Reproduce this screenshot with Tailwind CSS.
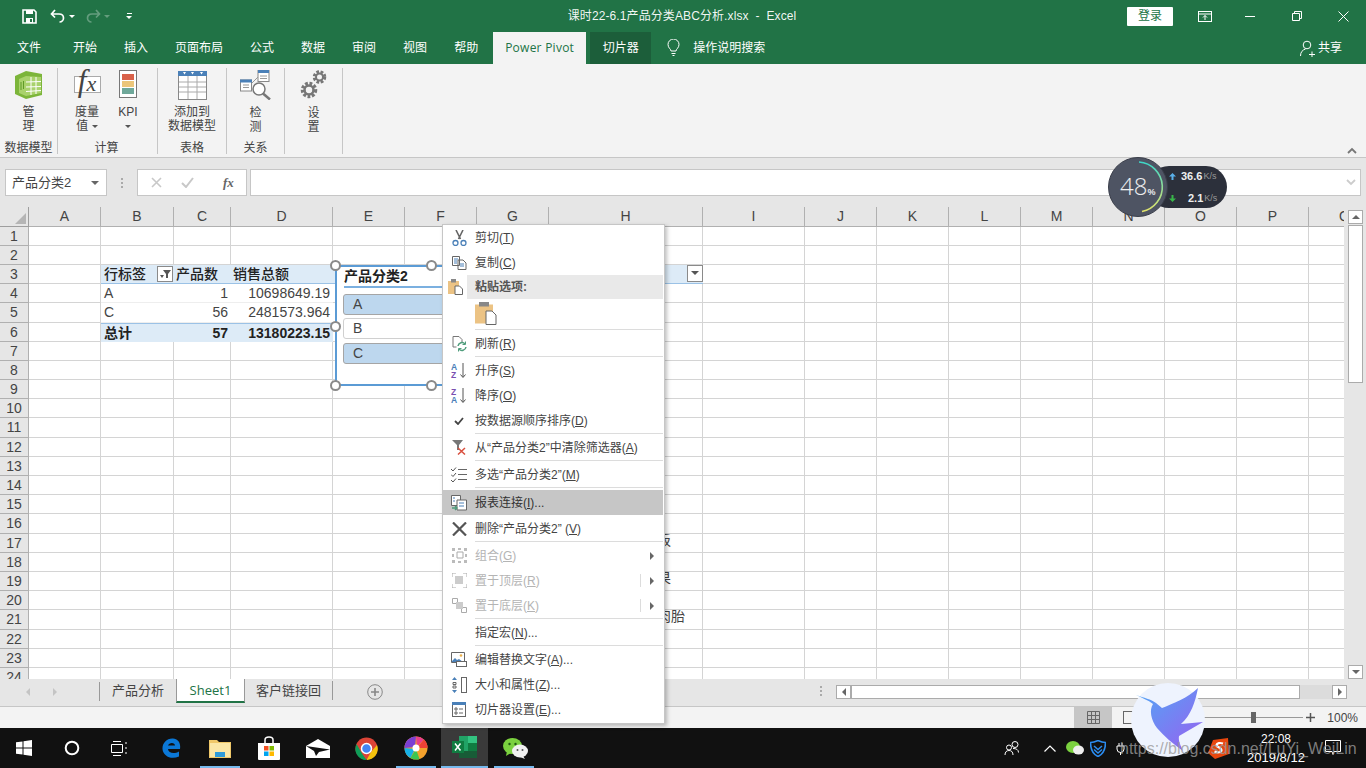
<!DOCTYPE html>
<html lang="zh-CN">
<head>
<meta charset="UTF-8">
<title>课时22-6.1产品分类ABC分析.xlsx - Excel</title>
<script src="https://cdn.jsdelivr.net/npm/@tailwindcss/browser@4"></script>
</head>
<body class="m-0 overflow-hidden">
<div class="relative w-[1366px] h-[768px] overflow-hidden bg-white text-[12px] text-[#444] font-['Liberation_Sans','Noto_Sans_CJK_SC',sans-serif]">

  <!-- title bar -->
  <div class="h-[32px] bg-[#217346] text-white grid grid-cols-[1fr_auto_1fr] items-center">
    <div class="flex items-center pl-[22px]">
      <svg class="w-[15px] h-[15px]" viewBox="0 0 15 15"><path d="M1 1h11l2 2v11H1z" fill="none" stroke="#fff" stroke-width="1.6"/><rect x="4" y="1" width="7" height="4" fill="#fff"/><rect x="4" y="9" width="7" height="5" fill="#fff"/><rect x="8" y="10" width="2" height="3" fill="#217346"/></svg>
      <svg class="w-[16px] h-[14px] ml-[13px]" viewBox="0 0 16 14"><path d="M5 1 1.500 5 5 8.500M2 5h7c3 0 4.500 2 4.500 4s-1.500 4-4 4" fill="none" stroke="#fff" stroke-width="1.700"/></svg>
      <span class="ml-[3px] w-0 h-0 border-x-[3px] border-x-transparent border-t-[3px] border-t-white"></span>
      <svg class="w-[16px] h-[14px] ml-[10px] opacity-30" viewBox="0 0 16 14"><path d="M11 1l3.500 4L11 8.500M14 5H7C4 5 2.500 7 2.500 9s1.500 4 4 4" fill="none" stroke="#fff" stroke-width="1.700"/></svg>
      <span class="ml-[3px] w-0 h-0 border-x-[3px] border-x-transparent border-t-[3px] border-t-white/30"></span>
      <span class="ml-[16px] flex flex-col items-center gap-[2px]"><span class="w-[5px] h-px bg-white"></span><span class="w-0 h-0 border-x-[3px] border-x-transparent border-t-[3px] border-t-white"></span></span>
    </div>
    <div class="text-center text-white/95 whitespace-pre tracking-[0.1px] pr-[2px]">课时22-6.1产品分类ABC分析.xlsx  -  Excel</div>
    <div class="flex items-center justify-end">
      <div class="w-[46px] h-[19px] bg-white rounded-[1px] text-[#217346] flex items-center justify-center mr-[25px]">登录</div>
      <svg class="w-[14px] h-[11px] mr-[33px]" viewBox="0 0 14 11"><rect x=".5" y=".5" width="13" height="10" fill="none" stroke="#fff"/><path d="M1 3h12M7 9V4.500M5 6.500l2-2 2 2" fill="none" stroke="#fff"/></svg>
      <span class="w-[10px] h-px bg-white mr-[37px]"></span>
      <svg class="w-[10px] h-[10px] mr-[36px]" viewBox="0 0 10 10"><path d="M2.500 2.500V.5h7v7h-2M.5 2.500h7v7h-7z" fill="none" stroke="#fff"/></svg>
      <svg class="w-[11px] h-[11px] mr-[17px]" viewBox="0 0 11 11"><path d="M.5.5l10 10M10.500.5l-10 10" stroke="#fff"/></svg>
    </div>
  </div>

  <!-- ribbon tabs -->
  <div class="h-[32px] bg-[#217346] text-white flex items-center">
    <div class="h-full flex items-center ml-[17px] mr-[32px]">文件</div>
    <div class="h-full flex items-center gap-[27px]">
      <span>开始</span><span>插入</span><span>页面布局</span><span>公式</span><span>数据</span><span>审阅</span><span>视图</span><span>帮助</span>
    </div>
    <div class="h-full w-[93px] ml-[15px] bg-[#f3f3f3] text-[#217346] flex items-center justify-center tracking-[0.25px] font-['Open_Sans',sans-serif]">Power Pivot</div>
    <div class="h-full w-[61px] ml-[4px] bg-[#1c5e3a] flex items-center justify-center">切片器</div>
    <svg class="w-[13px] h-[18px] ml-[16px]" viewBox="0 0 13 18"><path d="M4 12c0-2-3-3-3-6.500a5.500 5.500 0 0 1 11 0C12 9 9 10 9 12zM4.500 14.500h4M5.500 16.500h2" fill="none" stroke="#fff"/></svg>
    <div class="h-full flex items-center ml-[13px]">操作说明搜索</div>
    <div class="h-full flex items-center ml-auto mr-[24px]">
      <svg class="w-[15px] h-[17px] mr-[3px]" viewBox="0 0 15 17"><circle cx="7" cy="5" r="3.800" fill="none" stroke="#fff"/><path d="M.5 16c0-4 2-6 5-7M9 14.500h6M12 11.500v5.500" fill="none" stroke="#fff"/></svg>
      共享
    </div>
  </div>

  <!-- ribbon -->
  <div class="relative h-[94px] bg-[#f3f3f3] border-b border-[#c6c6c6] flex pt-[4px] leading-[14px] text-[#444]">
    <div class="w-[58px] h-[86px] border-r border-[#c6c6c6] flex flex-col items-center">
      <svg class="w-[30px] h-[30px] mt-[2px]" viewBox="0 0 30 30"><path d="M1 6 12 1l16 3v21l-16 4-11-5z" fill="#7cb53a"/><path d="M5 9l7-3v20l-7-3z" fill="#a9d26c"/><path d="M12 6l15 1v16l-15 3z" fill="#a9d26c"/><path d="M17 7v18M22 7v17M12 12l15-.5M12 17l15-.5M12 21.500l15-1" stroke="#fff"/><path d="M7 12v8M9.500 11v8" stroke="#5f9a28"/></svg>
      <div class="text-center mt-[5px] text-[12px]">管<br>理</div>
      <div class="mt-auto mb-[-1px]">数据模型</div>
    </div>
    <div class="w-[100px] h-[86px] border-r border-[#c6c6c6] flex flex-col">
      <div class="flex">
        <div class="w-[58px] flex flex-col items-center">
          <div class="relative w-[27px] h-[28px] mt-[2px] flex items-center justify-center">
            <span class="absolute left-0 right-0 top-[6px] h-[17px] border border-[#aaa] bg-white"></span>
            <span class="relative font-['Liberation_Serif',serif] italic text-[#444] leading-[28px]"><span class="text-[31px]">f</span><span class="text-[22px]">x</span></span>
          </div>
          <div class="text-center mt-[7px]">度量<br>值 <span class="inline-block align-middle w-0 h-0 border-x-[3px] border-x-transparent border-t-[3px] border-t-[#555]"></span></div>
        </div>
        <div class="w-[24px] flex flex-col items-center">
          <div class="w-[18px] h-[28px] mt-[2px] border border-[#777] bg-white flex flex-col gap-[1px] px-[2px] py-[3px]">
            <span class="flex-1 bg-[#d9614a]"></span><span class="flex-1 bg-[#ecc67a]"></span><span class="flex-1 bg-[#6fa89a]"></span>
          </div>
          <div class="text-center mt-[7px]">KPI<br><span class="inline-block align-middle w-0 h-0 border-x-[3px] border-x-transparent border-t-[3px] border-t-[#555]"></span></div>
        </div>
      </div>
      <div class="mt-auto mb-[-1px] text-center pl-[14px] pr-[16px]">计算</div>
    </div>
    <div class="w-[69px] h-[86px] border-r border-[#c6c6c6] flex flex-col items-center">
      <svg class="w-[29px] h-[29px] mt-[3px]" viewBox="0 0 29 29"><rect x=".5" y=".5" width="28" height="28" fill="#fff" stroke="#888"/><rect width="29" height="5" fill="#4a80b8"/><path d="M1 11h27M1 16h27M1 21h27M10 5v23M19 5v23" stroke="#aaa"/><path d="M5 1h3L6.500 3.500zM13 1h3l-1.500 2.500zM22 1h3l-1.500 2.500z" fill="#fff"/></svg>
      <div class="text-center mt-[5px]">添加到<br>数据模型</div>
      <div class="mt-auto mb-[-1px]">表格</div>
    </div>
    <div class="w-[58px] h-[86px] border-r border-[#c6c6c6] flex flex-col items-center">
      <svg class="w-[32px] h-[30px] mt-[2px]" viewBox="0 0 32 30"><rect x="18" y=".5" width="11" height="11" fill="#fff" stroke="#888"/><rect x="18" width="11" height="3" fill="#4a80b8"/><rect x=".5" y="10" width="11" height="11" fill="#fff" stroke="#888"/><rect y="9.500" width="12" height="3" fill="#4a80b8"/><path d="M12 13l6-6M20 6h7M20 8.500h7M3 15h6M3 17.500h6" stroke="#999"/><circle cx="19" cy="19" r="6" fill="#fff" stroke="#777" stroke-width="1.500"/><path d="M23 23.500 30 29.500" stroke="#777" stroke-width="2.500"/></svg>
      <div class="text-center mt-[6px]">检<br>测</div>
      <div class="mt-auto mb-[-1px]">关系</div>
    </div>
    <div class="w-[58px] h-[86px] border-r border-[#c6c6c6] flex flex-col items-center">
      <svg class="w-[27px] h-[30px] mt-[2px]" viewBox="0 0 27 30"><g fill="none" stroke="#777" stroke-dasharray="2.500 1.500"><circle cx="19.500" cy="7" r="5" stroke-width="3.500"/><circle cx="9" cy="20" r="6" stroke-width="4.500"/></g><circle cx="19.500" cy="7" r="3.500" fill="none" stroke="#777" stroke-width="2"/><circle cx="9" cy="20" r="4.500" fill="none" stroke="#777" stroke-width="2.500"/></svg>
      <div class="text-center mt-[6px]">设<br>置</div>
    </div>
    <svg class="absolute right-[9px] bottom-[3px] w-[10px] h-[7px]" viewBox="0 0 10 7"><path d="M1 6l4-4 4 4" fill="none" stroke="#777" stroke-width="1.800"/></svg>
  </div>

  <!-- formula bar -->
  <div class="h-[49px] bg-[#e6e6e6] flex items-start pt-[11px] pl-[5px] pr-[5px]">
    <div class="w-[102px] h-[27px] bg-white border border-[#c6c6c6] flex items-center pl-[6px] pr-[7px] text-[13px]">产品分类2<span class="ml-auto w-0 h-0 border-x-[4px] border-x-transparent border-t-[4px] border-t-[#666]"></span></div>
    <div class="w-[30px] h-[27px] flex flex-col items-center justify-center gap-[2px]"><span class="w-[2px] h-[2px] bg-[#aaa]"></span><span class="w-[2px] h-[2px] bg-[#aaa]"></span><span class="w-[2px] h-[2px] bg-[#aaa]"></span></div>
    <div class="w-[110px] h-[27px] bg-white border border-[#c6c6c6] flex items-center">
      <svg class="w-[11px] h-[11px] ml-[13px]" viewBox="0 0 11 11"><path d="M1 1l9 9M10 1l-9 9" stroke="#c8c8c8" stroke-width="1.600"/></svg>
      <svg class="w-[13px] h-[11px] ml-[19px]" viewBox="0 0 13 11"><path d="M1 6l4 4 7-9" fill="none" stroke="#c8c8c8" stroke-width="2"/></svg>
      <span class="ml-[29px] font-['Liberation_Serif',serif] italic font-bold text-[13px] text-[#666]">fx</span>
    </div>
    <div class="ml-[3px] flex-1 h-[27px] bg-white border border-[#c6c6c6] flex items-center justify-end pr-[4px]">
      <svg class="w-[10px] h-[7px]" viewBox="0 0 10 7"><path d="M1 1l4 4 4-4" fill="none" stroke="#ccc" stroke-width="1.800"/></svg>
    </div>
  </div>

  <!-- sheet area -->
  <div class="relative h-[472px] bg-[#e6e6e6] flex">
    <div id="sheet" class="w-[1344px] h-[472px] overflow-hidden grid grid-cols-[29px_72px_73px_57px_102px_72px_72px_72px_154px_102px_72px_72px_72px_72px_72px_72px_72px_72px] grid-rows-[19.600px_repeat(24,19.200px)] text-[14px] leading-[18px] content-start"></div>
    <div class="ml-[4px] w-[15px] h-[472px] flex flex-col">
      <div class="h-[14px] mt-[3px] bg-white border border-[#ababab] flex items-center justify-center"><span class="w-0 h-0 border-x-[4px] border-x-transparent border-b-[4px] border-b-[#666]"></span></div>
      <div class="h-[158px] mt-[1px] bg-white border border-[#ababab]"></div>
      <div class="flex-1"></div>
      <div class="h-[14px] bg-white border border-[#ababab] flex items-center justify-center"><span class="w-0 h-0 border-x-[4px] border-x-transparent border-t-[4px] border-t-[#666]"></span></div>
    </div>

    <!-- slicer -->
    <div class="absolute left-[335px] top-[58px] w-[200px] h-[121px] bg-white border-2 border-[#5b9bd5] border-r-0">
      <div class="ml-[7px] h-[21px] border-b-2 border-[#7bb0e0] font-bold text-[14px] leading-[18px] text-[#222]">产品分类2</div>
      <div class="ml-[6px] mt-[6px] h-[21px] bg-[#bdd7ee] border border-[#a5a5a5] rounded-[3px] pl-[9px] text-[14px] leading-[19px] flex items-center">A</div>
      <div class="ml-[6px] mt-[3px] h-[21px] bg-white border border-[#d0d0d0] rounded-[3px] pl-[9px] text-[14px] leading-[19px] flex items-center">B</div>
      <div class="ml-[6px] mt-[4px] h-[21px] bg-[#bdd7ee] border border-[#a5a5a5] rounded-[3px] pl-[9px] text-[14px] leading-[19px] flex items-center">C</div>
    </div>
    <span class="absolute left-[330px] top-[53px] w-[11px] h-[11px] rounded-full bg-white border-2 border-[#8a8a8a]"></span>
    <span class="absolute left-[426px] top-[53px] w-[11px] h-[11px] rounded-full bg-white border-2 border-[#8a8a8a]"></span>
    <span class="absolute left-[330px] top-[114px] w-[11px] h-[11px] rounded-full bg-white border-2 border-[#8a8a8a]"></span>
    <span class="absolute left-[330px] top-[173px] w-[11px] h-[11px] rounded-full bg-white border-2 border-[#8a8a8a]"></span>
    <span class="absolute left-[426px] top-[173px] w-[11px] h-[11px] rounded-full bg-white border-2 border-[#8a8a8a]"></span>
  </div>

  <!-- sheet tabs -->
  <div class="h-[28px] bg-[#e6e6e6] border-b border-[#c6c6c6] flex items-start">
    <div class="w-[100px] h-[19px] mt-[3px] flex items-center pl-[26px] gap-[23px] border-r border-[#999]">
      <span class="w-0 h-0 border-y-[4px] border-y-transparent border-r-[4px] border-r-[#c4c4c4]"></span>
      <span class="w-0 h-0 border-y-[4px] border-y-transparent border-l-[4px] border-l-[#c4c4c4]"></span>
    </div>
    <div class="w-[76px] h-[19px] mt-[2px] text-[13px] text-center">产品分析</div>
    <div class="w-[69px] h-[24px] bg-white border-x border-[#999] border-b-2 border-b-[#217346] text-[#217346] text-center text-[13px] leading-[22px] font-['Open_Sans','Liberation_Sans',sans-serif]">Sheet1</div>
    <div class="w-[88px] h-[19px] mt-[2px] text-[13px] text-center border-r border-[#999]">客户链接回</div>
    <svg class="w-[16px] h-[16px] ml-[34px] mt-[5px]" viewBox="0 0 16 16"><circle cx="8" cy="8" r="7.300" fill="none" stroke="#888"/><path d="M8 4v8M4 8h8" stroke="#888" stroke-width="1.600"/></svg>
    <div class="ml-[437px] mt-[7px] flex flex-col gap-[2px] w-[2px]"><span class="h-[2px] bg-[#aaa]"></span><span class="h-[2px] bg-[#aaa]"></span><span class="h-[2px] bg-[#aaa]"></span></div>
    <div class="ml-[14px] mt-[6px] w-[511px] h-[14px] flex">
      <div class="w-[15px] bg-white border border-[#ababab] flex items-center justify-center"><span class="w-0 h-0 border-y-[4px] border-y-transparent border-r-[4px] border-r-[#666]"></span></div>
      <div class="w-[449px] bg-white border border-[#ababab]"></div>
      <div class="w-[32px] bg-[#dcdcdc]"></div>
      <div class="w-[15px] bg-white border border-[#ababab] flex items-center justify-center"><span class="w-0 h-0 border-y-[4px] border-y-transparent border-l-[4px] border-l-[#666]"></span></div>
    </div>
  </div>

  <!-- status bar -->
  <div class="h-[21px] bg-[#f3f3f3] flex items-center justify-end pr-[8px] text-[#444]">
    <div class="w-[38px] h-[21px] bg-[#c6c6c6] flex items-center justify-center"><svg class="w-[13px] h-[13px]" viewBox="0 0 13 13"><path d="M.5.5h12v12H.5zM4.500.5v12M8.500.5v12M.5 4.500h12M.5 8.500h12" fill="none" stroke="#666"/></svg></div>
    <div class="w-[91px] h-[21px] flex items-center pl-[11px]"><span class="w-[13px] h-[13px] border border-[#666]"></span></div>
    <div class="relative w-[100px] h-px bg-[#999] flex justify-center items-center"><span class="w-[5px] h-[11px] bg-[#666]"></span></div>
    <svg class="w-[9px] h-[9px] ml-[3px]" viewBox="0 0 9 9"><path d="M0 4.500h9M4.500 0v9" stroke="#555" stroke-width="1.500"/></svg>
    <span class="ml-[12px] text-[12px]">100%</span>
  </div>

  <!-- taskbar -->
  <div class="relative h-[40px] bg-[#111] flex items-center text-white">
    <svg class="w-[16px] h-[16px] ml-[16px]" viewBox="0 0 16 16" fill="#fff"><path d="M0 2.300 6.500 1.400V7.500H0zM7.500 1.200 16 0v7.500H7.500zM0 8.500h6.500v6.100L0 13.700zM7.500 8.500H16V16l-8.500-1.200z"/></svg>
    <svg class="w-[16px] h-[16px] ml-[32px]" viewBox="0 0 16 16"><circle cx="8" cy="8" r="6.300" fill="none" stroke="#fff" stroke-width="2"/></svg>
    <svg class="w-[17px] h-[15px] ml-[31px]" viewBox="0 0 17 15"><path d="M.5 3.500h11v8H.5zM2 .5h8M2 14.500h8M15 1v2M15 6v2M15 11v2" fill="none" stroke="#fff"/></svg>
    <svg class="w-[20px] h-[21px] ml-[34px]" viewBox="0 0 20 21"><path d="M18 11H6c.3 4 6 5.500 11 2.500v5C9 22 1 18 .5 11 .2 5 5 0 11 .5c5 .2 8 4.500 7 10.500zM6 7.500h7c0-3.500-6-3.500-7 0z" fill="#0b78d7"/></svg>
    <svg class="w-[22px] h-[20px] ml-[27px]" viewBox="0 0 22 20"><path d="M0 2h8l2 2h12v16H0z" fill="#f0c869"/><path d="M1 5h20v14H1z" fill="#fbe7a6"/><path d="M6 19v-5h10v5z" fill="#2f9bd8"/><path d="M9 14v-3h4v3z" fill="#fbe7a6"/></svg>
    <svg class="w-[22px] h-[24px] ml-[27px]" viewBox="0 0 22 24"><path d="M0 7h22v16a1 1 0 0 1-1 1H1a1 1 0 0 1-1-1z" fill="#fff"/><path d="M7 7V4c0-4 8-4 8 0v3" fill="none" stroke="#fff" stroke-width="1.500"/><rect x="6" y="10" width="4.500" height="4.500" fill="#f25022"/><rect x="11.500" y="10" width="4.500" height="4.500" fill="#7fba00"/><rect x="6" y="15.500" width="4.500" height="4.500" fill="#00a4ef"/><rect x="11.500" y="15.500" width="4.500" height="4.500" fill="#ffb900"/></svg>
    <svg class="w-[24px] h-[19px] ml-[26px]" viewBox="0 0 24 19"><path d="M0 7 12 0l12 7v12H0z" fill="#fff"/><path d="M0 7l24 3.500-11 2.500-3 4-2-5z" fill="#111"/></svg>
    <svg class="w-[23px] h-[23px] ml-[25px]" viewBox="0 0 23 23"><circle cx="11.500" cy="11.500" r="11" fill="#db4437"/><path d="M1.500 7 7 16.500 11.500 23A11 11 0 0 1 1.500 7z" fill="#0f9d58"/><path d="M22 8a11 11 0 0 1-10.500 15L16 15z" fill="#f4c20d"/><circle cx="11.500" cy="11.500" r="5" fill="#4285f4" stroke="#fff" stroke-width="1.500"/></svg>
    <svg class="w-[24px] h-[24px] ml-[26px]" viewBox="0 0 24 24"><circle cx="12" cy="12" r="11.500" fill="#f4a12c"/><path d="M12 .5a11.500 11.500 0 0 1 8 3L13 11z" fill="#e83e8c"/><path d="M20 3.500a11.500 11.500 0 0 1 3.500 8.500H13z" fill="#ef4136"/><path d="M.5 12A11.500 11.500 0 0 1 12 .5L11 11z" fill="#7b3fd3"/><path d="M.5 12a11.500 11.500 0 0 0 6 10L11 13z" fill="#16b1e8"/><path d="M6.500 22a11.500 11.500 0 0 0 9 1L12 13z" fill="#3cc651"/><circle cx="12" cy="12" r="3.500" fill="#fff"/></svg>
    <div class="w-[47px] h-[40px] ml-[13px] bg-[#3a3a3a] flex items-center justify-center border-b-2 border-[#76b9ed]">
      <svg class="w-[25px] h-[22px]" viewBox="0 0 25 22"><rect x="7" y="0" width="18" height="22" fill="#21a366"/><rect x="16" y="0" width="9" height="7" fill="#33c481"/><rect x="16" y="7" width="9" height="8" fill="#107c41"/><rect x="7" y="15" width="18" height="7" fill="#185c37"/><rect x="0" y="5" width="12" height="12" fill="#107c41"/><path d="M3 7.500l5.500 7M8.500 7.500l-5.500 7" stroke="#fff" stroke-width="1.500"/></svg>
    </div>
    <svg class="w-[25px] h-[21px] ml-[15px]" viewBox="0 0 25 21"><ellipse cx="9.500" cy="8" rx="9.500" ry="8" fill="#7bd13f"/><path d="M4 13 3 18l5-3z" fill="#7bd13f"/><ellipse cx="17" cy="13" rx="8" ry="6.500" fill="#f1f1f1"/><path d="M20 18l2 3-5-2z" fill="#f1f1f1"/><circle cx="6.500" cy="6" r="1.200" fill="#205a12"/><circle cx="12.500" cy="6" r="1.200" fill="#205a12"/><circle cx="14.500" cy="12" r="1" fill="#555"/><circle cx="19.500" cy="12" r="1" fill="#555"/></svg>

    <svg class="w-[16px] h-[16px] ml-[476px]" viewBox="0 0 16 16"><circle cx="11" cy="4.500" r="3" fill="none" stroke="#fff"/><circle cx="5" cy="7.500" r="2.500" fill="none" stroke="#fff"/><path d="M1 15c0-3 1.500-4.500 4-4.500s4 1.500 4 4.500M9 8.500c3 0 5.500 1 5.500 4" fill="none" stroke="#fff"/></svg>
    <svg class="w-[12px] h-[7px] ml-[24px]" viewBox="0 0 12 7"><path d="M.5 6.500 6 1l5.500 5.500" fill="none" stroke="#fff" stroke-width="1.200"/></svg>
    <svg class="w-[18px] h-[14px] ml-[10px]" viewBox="0 0 18 14"><ellipse cx="7" cy="6" rx="7" ry="6" fill="#7bd13f"/><ellipse cx="12.500" cy="9" rx="5.500" ry="4.500" fill="#eee"/></svg>
    <svg class="w-[16px] h-[17px] ml-[6px]" viewBox="0 0 16 17"><path d="M8 .5c3 1.500 5 2 7.500 2 0 7-2 11.500-7.500 14C2.500 14 .5 9.500.5 2.500 3 2.500 5 2 8 .5z" fill="none" stroke="#2b8cf0" stroke-width="1.600"/><path d="M4 6l4 3.500L12 6M4 9.500 8 13l4-3.500" fill="none" stroke="#2b8cf0" stroke-width="1.500"/></svg>
    <svg class="w-[14px] h-[13px] ml-[9px]" viewBox="0 0 14 13"><path d="M4 1v3M7 1v3M2 4h7v3a3 3 0 0 1-7 0zM5.500 10v3" fill="none" stroke="#fff"/></svg>
    <svg class="w-[21px] h-[21px] ml-[79px]" viewBox="0 0 21 21"><path d="M5 2 20 0l1 16-14 5L0 15z" fill="#e8470e"/><path d="M15 5.500c-3-1-6-.5-6.500 1.500s5 2.500 5 5-4 3-7 1.500" fill="none" stroke="#fff" stroke-width="2.200"/></svg>
    <div class="absolute left-[1236px] top-0 w-[80px] h-[40px] flex flex-col items-center pt-[4px] leading-[15px]">
      <span class="text-[12px]">22:08</span>
      <span class="text-[13px] mt-[3px] whitespace-nowrap">2019/8/12</span>
    </div>
    <svg class="absolute left-[1325px] top-[12px] w-[16px] h-[16px]" viewBox="0 0 16 16"><path d="M.5.5h15v11H9l-1 3-1-3H.5z" fill="none" stroke="#fff"/></svg>
    <!-- running app underlines -->
    <span class="absolute left-[200px] bottom-0 w-[40px] h-[2px] bg-[#76b9ed]"></span>
    <span class="absolute left-[396px] bottom-0 w-[40px] h-[2px] bg-[#76b9ed]"></span>
    <span class="absolute left-[494px] bottom-0 w-[40px] h-[2px] bg-[#76b9ed]"></span>
  </div>

  <!-- context menu -->
  <div class="absolute left-[442px] top-[224px] w-[223px] h-[500px] bg-white border border-[#c6c6c6] shadow-[2px_2px_4px_rgba(0,0,0,0.25)] text-[#444]">
    <div class="flex items-center h-[25px]"><span class="w-[32px] flex justify-center"><svg class="w-[15px] h-[16px]" viewBox="0 0 15 16"><path d="M4 0l4.500 9M11 0 6.500 9" stroke="#666" stroke-width="1.600"/><circle cx="3.500" cy="13" r="2.500" fill="none" stroke="#4a80b8" stroke-width="1.300"/><circle cx="11.500" cy="13" r="2.500" fill="none" stroke="#4a80b8" stroke-width="1.300"/></svg></span><span>剪切(<u>T</u>)</span></div>
    <div class="flex items-center h-[25px]"><span class="w-[32px] flex justify-center"><svg class="w-[15px] h-[14px]" viewBox="0 0 15 14"><path d="M.5.500h7v9h-7zM6 4h5l3 3v6.500H6z" fill="#fff" stroke="#666"/><path d="M2 3h4M2 5h3M2 7h3M8 8h4M8 10h4" stroke="#4a80b8"/></svg></span><span>复制(<u>C</u>)</span></div>
    <div class="flex items-center h-[24px]"><span class="w-[24px] flex justify-center"><svg class="w-[15px] h-[16px]" viewBox="0 0 15 16"><rect y="2" width="11" height="13" fill="#ecc384"/><rect x="3" y="0" width="5" height="3.500" fill="#888"/><path d="M7 7h4.500L14.500 10v5.500H7z" fill="#fff" stroke="#666"/></svg></span><span class="flex-1 h-[24px] mr-[1px] bg-[#e9e9e9] flex items-center pl-[8px] font-bold text-[#555]">粘贴选项:</span></div>
    <div class="h-[30px] pl-[32px] pt-[3px]"><svg class="w-[22px] h-[23px]" viewBox="0 0 22 23"><rect y="2.500" width="18" height="19" fill="#ecc384"/><rect x="4" y="0" width="10" height="4.500" fill="#888"/><path d="M11 9h6l4 4v9.500H11z" fill="#fff" stroke="#666"/></svg></div>
    <div class="h-[2px] ml-[32px] mr-[1px] border-t border-[#dcdcdc]"></div>
    <div class="flex items-center h-[25px]"><span class="w-[32px] flex justify-center"><svg class="w-[15px] h-[16px]" viewBox="0 0 15 16"><path d="M4.500 11H1V.5h6L10 3.500v3" fill="none" stroke="#777"/><path d="M6 10a4 4 0 0 1 7-2M14 11a4 4 0 0 1-7 2" fill="none" stroke="#4f9d7c" stroke-width="1.500"/><path d="M13.500 5.500v3h-3M6.500 15.500v-3h3" fill="none" stroke="#4f9d7c"/></svg></span><span>刷新(<u>R</u>)</span></div>
    <div class="h-[2px] ml-[32px] mr-[1px] border-t border-[#dcdcdc]"></div>
    <div class="flex items-center h-[25px]"><span class="w-[32px] flex justify-center"><svg class="w-[16px] h-[17px]" viewBox="0 0 16 17"><text x="0" y="7.500" font-size="8.500" font-weight="700" fill="#4a80b8" font-family="Liberation Sans">A</text><text x="0" y="16" font-size="8.500" font-weight="700" fill="#7a4fb0" font-family="Liberation Sans">Z</text><path d="M12 1v14M9.500 12.500 12 15.500l2.500-3" fill="none" stroke="#555"/></svg></span><span>升序(<u>S</u>)</span></div>
    <div class="flex items-center h-[25px]"><span class="w-[32px] flex justify-center"><svg class="w-[16px] h-[17px]" viewBox="0 0 16 17"><text x="0" y="7.500" font-size="8.500" font-weight="700" fill="#7a4fb0" font-family="Liberation Sans">Z</text><text x="0" y="16" font-size="8.500" font-weight="700" fill="#4a80b8" font-family="Liberation Sans">A</text><path d="M12 1v14M9.500 12.500 12 15.500l2.500-3" fill="none" stroke="#555"/></svg></span><span>降序(<u>O</u>)</span></div>
    <div class="flex items-center h-[25px]"><span class="w-[32px] flex justify-center"><svg class="w-[10px] h-[8px]" viewBox="0 0 10 8"><path d="M1 4l3 3 5-6" fill="none" stroke="#444" stroke-width="1.800"/></svg></span><span>按数据源顺序排序(<u>D</u>)</span></div>
    <div class="h-[2px] ml-[32px] mr-[1px] border-t border-[#dcdcdc]"></div>
    <div class="flex items-center h-[25px]"><span class="w-[32px] flex justify-center"><svg class="w-[15px] h-[15px]" viewBox="0 0 15 15"><path d="M0 0h11L7 5v5H5V5z" fill="#777"/><path d="M6 8l7 6.500M13 8l-7 6.500" stroke="#d9503f" stroke-width="1.500"/></svg></span><span>从“产品分类2”中清除筛选器(<u>A</u>)</span></div>
    <div class="h-[2px] ml-[32px] mr-[1px] border-t border-[#dcdcdc]"></div>
    <div class="flex items-center h-[25px]"><span class="w-[32px] flex justify-center"><svg class="w-[16px] h-[15px]" viewBox="0 0 16 15"><path d="M0 2l2 2 3-3.500M0 7.500l2 2 3-3.500M0 13l2 2 3-3.500" fill="none" stroke="#555"/><path d="M7 2.500h9M7 7.500h9M7 12.500h9" stroke="#666"/></svg></span><span>多选“产品分类2”(<u>M</u>)</span></div>
    <div class="h-[2px] ml-[32px] mr-[1px] border-t border-[#dcdcdc]"></div>
    <div class="flex items-center h-[25px] mt-px mr-[1px] bg-[#c6c6c6] text-[#333]"><span class="w-[32px] flex justify-center"><svg class="w-[16px] h-[16px]" viewBox="0 0 16 16"><path d="M.5.500h9v10h-9z" fill="#fff" stroke="#666"/><path d="M6 5h9.500v10H6z" fill="#fff" stroke="#666"/><path d="M2 3h2M2 6h2M8 8h5M8 11h5" stroke="#4a80b8"/><path d="M1 13h5M4 11l2 2-2 2" fill="none" stroke="#4f9d7c" stroke-width="1.300"/></svg></span><span>报表连接(<u>I</u>)...</span></div>
    <div class="flex items-center h-[25px] mt-px"><span class="w-[32px] flex justify-center"><svg class="w-[15px] h-[14px]" viewBox="0 0 15 14"><path d="M1 .5l13 13M14 .5l-13 13" stroke="#555" stroke-width="2.200"/></svg></span><span>删除“产品分类2” (<u>V</u>)</span></div>
    <div class="h-[2px] ml-[32px] mr-[1px] border-t border-[#dcdcdc]"></div>
    <div class="flex items-center h-[25px] text-[#b4b4b4]"><span class="w-[32px] flex justify-center"><svg class="w-[15px] h-[15px]" viewBox="0 0 15 15"><path d="M5 4h6v6H5z" fill="none" stroke="#aaa"/><path d="M0 0h3v3H0zM12 0h3v3h-3zM0 12h3v3H0zM12 12h3v3h-3zM0 6h2v3H0zM13 6h2v3h-2zM6 0h3v2H6zM6 13h3v2H6z" fill="#bbb"/></svg></span><span>组合(<u>G</u>)</span><span class="ml-auto mr-[10px] w-0 h-0 border-y-[4px] border-y-transparent border-l-[4px] border-l-[#666]"></span></div>
    <div class="flex items-center h-[25px] text-[#b4b4b4]"><span class="w-[32px] flex justify-center"><svg class="w-[15px] h-[15px]" viewBox="0 0 15 15"><path d="M0 4V0h4M15 11v4h-4M11 0h4v4M0 11v4h4" fill="none" stroke="#aaa"/><rect x="3" y="3" width="8" height="8" fill="#ccc"/></svg></span><span>置于顶层(<u>R</u>)</span><span class="ml-auto mr-[9px] h-[13px] border-l border-[#dcdcdc]"></span><span class="mr-[10px] w-0 h-0 border-y-[4px] border-y-transparent border-l-[4px] border-l-[#666]"></span></div>
    <div class="flex items-center h-[25px] text-[#b4b4b4]"><span class="w-[32px] flex justify-center"><svg class="w-[15px] h-[15px]" viewBox="0 0 15 15"><path d="M.5.5h5v5h-5zM9.500 9.500h5v5h-5z" fill="none" stroke="#aaa"/><rect x="4" y="4" width="7" height="7" fill="#ccc"/></svg></span><span>置于底层(<u>K</u>)</span><span class="ml-auto mr-[9px] h-[13px] border-l border-[#dcdcdc]"></span><span class="mr-[10px] w-0 h-0 border-y-[4px] border-y-transparent border-l-[4px] border-l-[#666]"></span></div>
    <div class="h-[2px] ml-[32px] mr-[1px] border-t border-[#dcdcdc]"></div>
    <div class="flex items-center h-[25px] pl-[32px]"><span>指定宏(<u>N</u>)...</span></div>
    <div class="h-[2px] ml-[32px] mr-[1px] border-t border-[#dcdcdc]"></div>
    <div class="flex items-center h-[25px]"><span class="w-[32px] flex justify-center"><svg class="w-[16px] h-[15px]" viewBox="0 0 16 15"><path d="M.5.5h13v10H.5z" fill="#fff" stroke="#666"/><path d="M1 9l3-3 2 2 2-1 4 3H1z" fill="#4a80b8"/><circle cx="10" cy="3.500" r="1.300" fill="#ecb24d"/><rect x="5.500" y="9.500" width="10" height="5" fill="#fff" stroke="#666"/></svg></span><span>编辑替换文字(<u>A</u>)...</span></div>
    <div class="flex items-center h-[25px]"><span class="w-[32px] flex justify-center"><svg class="w-[15px] h-[16px]" viewBox="0 0 15 16"><path d="M2.500 0 5 3H0zM2.500 16 5 13H0z" fill="#4a80b8"/><path d="M1 5.500h3v2H1zM1 9h3v2H1z" fill="none" stroke="#666"/><rect x="9.500" y=".5" width="5" height="15" fill="#fff" stroke="#666"/></svg></span><span>大小和属性(<u>Z</u>)...</span></div>
    <div class="flex items-center h-[25px]"><span class="w-[32px] flex justify-center"><svg class="w-[14px] h-[15px]" viewBox="0 0 14 15"><rect x=".5" y=".5" width="13" height="14" fill="#fff" stroke="#666"/><rect width="14" height="3" fill="#4a80b8"/><path d="M3 6h2v2H3zM3 10h2v2H3zM7 7h4M7 11h4" fill="none" stroke="#666"/></svg></span><span>切片器设置(<u>E</u>)...</span></div>
  </div>

  <!-- network speed widget -->
  <div class="absolute left-[1108px] top-[157px] w-[120px] h-[60px]">
    <div class="absolute left-[40px] top-[9px] w-[79px] h-[42px] rounded-full bg-[#2c303b] text-[11px] font-bold text-[#eee] leading-[14px]">
      <div class="flex items-center absolute left-[21px] top-[3px]"><svg class="w-[7px] h-[7px] mr-[5px]" viewBox="0 0 7 7"><path d="M3.500 0 7 3.500H4.500V7h-2V3.500H0z" fill="#5ab0ea"/></svg>36.6<span class="text-[9px] font-normal text-[#999] ml-px">K/s</span></div>
      <div class="flex items-center absolute left-[21px] top-[25px]"><svg class="w-[7px] h-[7px] mr-[12px]" viewBox="0 0 7 7"><path d="M3.500 7 7 3.500H4.500V0h-2v3.500H0z" fill="#39b54a"/></svg>2.1<span class="text-[9px] font-normal text-[#999] ml-px">K/s</span></div>
    </div>
    <svg class="absolute left-0 top-0 w-[60px] h-[60px]" viewBox="0 0 60 60"><defs><linearGradient id="arcGrad" x1="0" y1="0" x2="0" y2="1"><stop offset="0" stop-color="#3cd6c8"/><stop offset="1" stop-color="#e2e36a"/></linearGradient></defs><circle cx="30" cy="30" r="29.500" fill="#4e5463" stroke="#3a3e4a"/><path d="M31 5a25 25 0 0 1 3 49.500" fill="none" stroke="url(#arcGrad)" stroke-width="1.600"/></svg>
    <div class="absolute left-[12px] top-[14px] flex items-baseline text-white/90"><span class="text-[24px] font-['Open_Sans',sans-serif] font-light leading-[30px]">48</span><span class="text-[9px] font-bold">%</span></div>
  </div>

  <!-- feiniao badge -->
  <div class="absolute left-[1131px] top-[683px] w-[74px] h-[74px] rounded-full bg-[#eef3fe]">
    <svg class="w-[74px] h-[74px]" viewBox="0 0 74 74"><defs><linearGradient id="birdGrad" x1="0" y1="0" x2="1" y2="1"><stop offset="0" stop-color="#4fa8f5"/><stop offset="1" stop-color="#9a5ef0"/></linearGradient></defs><path d="M5 12C13 15 20 16 25 20l6 5c10-4 26-10 36-20-3 15-7 27-17 36l22-2-24 14c-1 5 2 10 4 15-10-7-19-15-26-23-6-8-8-18-4-24-5-4-11-6-17-9z" fill="url(#birdGrad)"/></svg>
  </div>

  <!-- blog watermark -->
  <div class="absolute left-[1120px] top-[738px] text-[16px] leading-[22px] text-[#9a9a9a]/80 whitespace-nowrap">https://blog.csdn.net/LuYi_WeiLin</div>
</div>

<script>
const letters = ["A","B","C","D","E","F","G","H","I","J","K","L","M","N","O","P","Q"];
const grid = "border-r border-b border-[#d4d4d4] bg-white overflow-hidden whitespace-nowrap";
const pivotHead = "border-b border-[#9bc2e6] bg-[#ddebf7] overflow-hidden whitespace-nowrap font-medium text-[#222]";
const pivotBody = "border-b border-[#eeeeee] bg-white overflow-hidden whitespace-nowrap";
const pivotFoot = "border-t border-[#9bc2e6] bg-[#ddebf7] overflow-hidden whitespace-nowrap font-bold text-[#222]";

// cells that hold something, key is row + column letter
const cells = {
  "3B": [pivotHead + " flex items-center pl-[3px]", '行标签<span class="ml-auto mr-px w-[16px] h-[16px] bg-white border border-[#8a8a8a] flex items-center justify-center"><svg class="w-[11px] h-[9px]" viewBox="0 0 11 9"><path d="M3 0h8L8 4v4H6V4z" fill="#555"/><path d="M0 5h4L2 8z" fill="#555"/></svg></span>'],
  "3C": [pivotHead + " pl-[2px]", "产品数"],
  "3D": [pivotHead + " pl-[2px]", "销售总额"],
  "3E": [pivotHead, ""],
  "3H": [pivotHead + " flex justify-end", '<span class="w-[16px] h-[17px] bg-white border border-[#8a8a8a] flex items-center justify-center"><span class="w-0 h-0 border-x-[4px] border-x-transparent border-t-[4px] border-t-[#555]"></span></span>'],
  "4B": [pivotBody + " pl-[3px]", "A"],
  "4C": [pivotBody + " text-right pr-[3px]", "1"],
  "4D": [pivotBody + " text-right pr-[3px]", "10698649.19"],
  "5B": [pivotBody + " pl-[3px]", "C"],
  "5C": [pivotBody + " text-right pr-[3px]", "56"],
  "5D": [pivotBody + " text-right pr-[3px]", "2481573.964"],
  "6B": [pivotFoot + " pl-[3px]", "总计"],
  "6C": [pivotFoot + " text-right pr-[3px]", "57"],
  "6D": [pivotFoot + " text-right pr-[3px]", "13180223.15"],
  "17H": [grid + " pl-[94px] leading-[13px]", "地板"],
  "19H": [grid + " pl-[94px] leading-[13px]", "水果"],
  "21H": [grid + " pl-[108px] leading-[13px]", "肉胎"]
};

let html = '<div class="border-b border-r border-[#9e9e9e] bg-[#e6e6e6] flex items-end justify-end p-[2px]"><span class="w-0 h-0 border-l-[11px] border-l-transparent border-b-[11px] border-b-[#b5b5b5]"></span></div>';
for (const c of letters) {
  html += '<div class="border-b border-r border-[#b0b0b0] bg-[#e6e6e6] text-center">' + c + '</div>';
}
for (let r = 1; r <= 24; r++) {
  html += '<div class="border-b border-r border-[#b0b0b0] bg-[#e6e6e6] text-center">' + r + '</div>';
  for (const c of letters) {
    const cell = cells[r + c];
    html += cell ? '<div class="' + cell[0] + '">' + cell[1] + '</div>' : '<div class="' + grid + '"></div>';
  }
}
document.getElementById("sheet").innerHTML = html;
</script>
</body>
</html>
